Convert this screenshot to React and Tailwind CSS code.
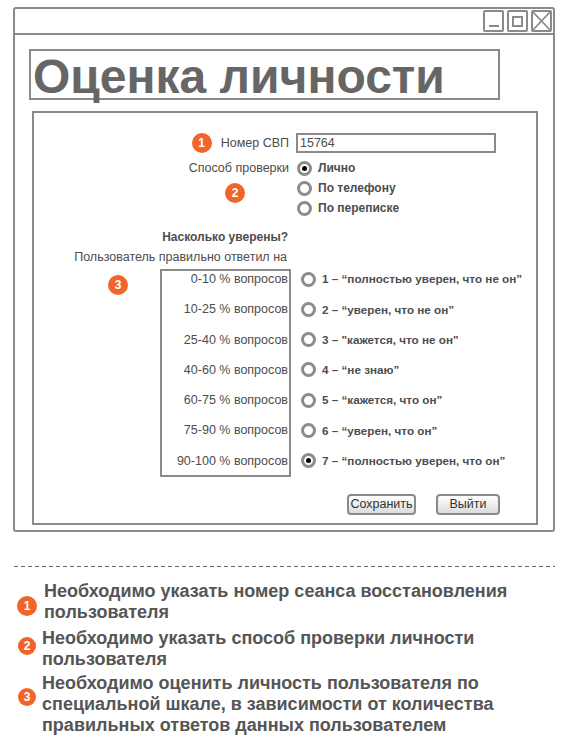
function Badge({ n, size = "w-[20px] h-[20px] text-[12px]" }) {
  return (
    <span
      className={`${size} shrink-0 rounded-full bg-[#f1652a] text-white font-bold flex items-center justify-center leading-none`}
    >
      {n}
    </span>
  );
}

function Radio({ checked }) {
  return (
    <span className="w-[15px] h-[15px] shrink-0 rounded-full border-[3px] border-[#8c8c8c] bg-white flex items-center justify-center">
      {checked && <span className="w-[5px] h-[5px] rounded-full bg-black" />}
    </span>
  );
}

const ranges = [
  "0-10 % вопросов",
  "10-25 % вопросов",
  "25-40 % вопросов",
  "40-60 % вопросов",
  "60-75 % вопросов",
  "75-90 % вопросов",
  "90-100 % вопросов",
];

const grades = [
  "1 – “полностью уверен, что не он”",
  "2 – “уверен, что не он”",
  "3 – \"кажется, что не он\"",
  "4 – “не знаю”",
  "5 – “кажется, что он”",
  "6 – “уверен, что он”",
  "7 – “полностью уверен, что он”",
];

export default function App() {
  return (
    <div className="w-[561px] h-[745px] bg-white overflow-hidden font-['Liberation_Sans',Arial,sans-serif] text-[#4d4d4d]">
      <div className="pl-[13px] pt-[7px]">
        {/* окно */}
        <div className="w-[542px] h-[525px] border-2 border-[#8a8a8a] rounded-[3px]">
          <div className="h-[26px] border-b-2 border-[#8a8a8a] flex justify-end items-start pt-[1px] pr-[1px] gap-[3px]">
            <span className="w-[21px] h-[22px] border-2 border-[#8a8a8a] rounded-[2px] flex items-end justify-center pb-[3px]">
              <span className="w-[10px] h-[2px] bg-[#8a8a8a]" />
            </span>
            <span className="w-[21px] h-[22px] border-2 border-[#8a8a8a] rounded-[2px] flex items-center justify-center">
              <span className="w-[11px] h-[11px] border-2 border-[#8a8a8a]" />
            </span>
            <span className="w-[21px] h-[22px] border-2 border-[#8a8a8a] rounded-[2px] overflow-hidden">
              <svg width="17" height="18" viewBox="0 0 17 18" className="block">
                <path d="M0 0 L17 18 M17 0 L0 18" stroke="#8a8a8a" strokeWidth="1.6" />
              </svg>
            </span>
          </div>

          <div className="ml-[14px] mt-[14px] w-[471px] h-[51px] border-2 border-[#8a8a8a] pl-[2px]">
            <div className="text-[48px] leading-[47px] font-bold text-[#666] mt-[2px]">Оценка личности</div>
          </div>

          {/* панель */}
          <div className="ml-[17px] mt-[11px] w-[506px] h-[414px] border-2 border-[#8a8a8a] text-[12.5px]">
            <div className="flex items-center h-[20px] mt-[20px]">
              <div className="w-[255px] flex justify-end items-center gap-[9px]">
                <Badge n="1" />
                <span className="whitespace-pre">Номер СВП</span>
              </div>
              <div className="ml-[7px] w-[200px] h-[20px] border-2 border-[#8a8a8a] pl-[2px] flex items-center leading-none">
                15764
              </div>
            </div>

            <div className="flex mt-[5px]">
              <div className="w-[255px] flex flex-col items-end">
                <div className="h-[20px] flex items-center">Способ проверки</div>
                <div className="mt-[5px] mr-[44px]">
                  <Badge n="2" />
                </div>
              </div>
              <div className="ml-[8px] flex flex-col text-[12px]">
                {["Лично", "По телефону", "По переписке"].map((t, i) => (
                  <div key={t} className="h-[20px] flex items-center gap-[6px] font-bold">
                    <Radio checked={i === 0} />
                    <span>{t}</span>
                  </div>
                ))}
              </div>
            </div>

            <div className="w-[254px] text-right font-bold text-[12px] mt-[11px] leading-[16px]">Насколько уверены?</div>
            <div className="w-[253px] text-right mt-[4px] leading-[16px]">Пользователь правильно ответил на</div>

            <div className="flex mt-[4px]">
              <div className="w-[126px] pl-[74px] pt-[6px]">
                <Badge n="3" />
              </div>
              <div className="w-[131px] h-[208px] border-2 border-[#8a8a8a] flex flex-col gap-[14.3px] pr-[1px]">
                {ranges.map((r) => (
                  <div key={r} className="h-[16px] leading-[16px] text-right whitespace-nowrap">
                    {r}
                  </div>
                ))}
              </div>
              <div className="ml-[10px] flex flex-col gap-[14.3px] pt-[2px] text-[11.7px]">
                {grades.map((g, i) => (
                  <div key={g} className="h-[16px] flex items-center gap-[6px] font-bold">
                    <Radio checked={i === 6} />
                    <span className="whitespace-nowrap">{g}</span>
                  </div>
                ))}
              </div>
            </div>

            <div className="flex ml-[313px] mt-[17px] gap-[20px]">
              <button className="w-[69px] h-[21px] border-2 border-[#8a8a8a] rounded-[4px] bg-gradient-to-b from-white to-[#dcdcdc] text-[12.5px] text-[#333] leading-none">
                Сохранить
              </button>
              <button className="w-[64px] h-[21px] border-2 border-[#8a8a8a] rounded-[4px] bg-gradient-to-b from-white to-[#dcdcdc] text-[12.5px] text-[#333] leading-none">
                Выйти
              </button>
            </div>
          </div>
        </div>
      </div>

      {/* пояснения */}
      <div className="ml-[14px] mt-[34px] w-[541px] h-[1px] bg-[repeating-linear-gradient(90deg,#666_0_4px,transparent_4px_7px)]" />

      <div className="text-[18px] leading-[21px] font-bold text-[#555]">
        <div className="flex items-start mt-[14px] pl-[17px] gap-[7px]">
          <span className="mt-[15px]">
            <Badge n="1" size="w-[20px] h-[20px] text-[12px]" />
          </span>
          <div>
            Необходимо указать номер сеанса восстановления
            <br />
            пользователя
          </div>
        </div>
        <div className="flex items-start mt-[5px] pl-[18px] gap-[6px]">
          <span className="mt-[9px]">
            <Badge n="2" size="w-[18px] h-[18px] text-[12px]" />
          </span>
          <div>
            Необходимо указать способ проверки личности
            <br />
            пользователя
          </div>
        </div>
        <div className="flex items-start mt-[3px] pl-[18px] gap-[6px]">
          <span className="mt-[15px]">
            <Badge n="3" size="w-[18px] h-[18px] text-[12px]" />
          </span>
          <div>
            Необходимо оценить личность пользователя по
            <br />
            специальной шкале, в зависимости от количества
            <br />
            правильных ответов данных пользователем
          </div>
        </div>
      </div>
    </div>
  );
}
